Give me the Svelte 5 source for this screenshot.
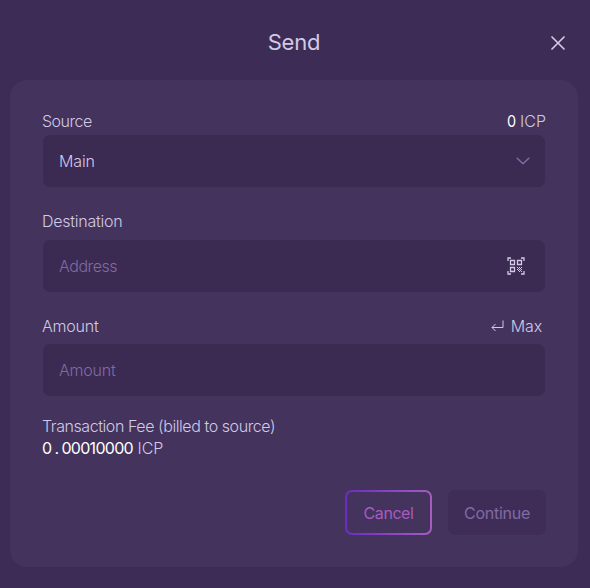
<script>
  let address = $state('');
  let amount = $state('');
</script>

<main class="dialog">
  <header>
    <h1>Send</h1>
    <button class="close" aria-label="Close">
      <svg width="14" height="14" viewBox="0 0 14 14"><path d="M1 1l12 12M13 1L1 13" /></svg>
    </button>
  </header>
  <section class="card">
    <div class="row first">
      <span class="source">Source</span>
      <span class="balance"><b>0</b> ICP</span>
    </div>
    <div class="field">
      <span class="main">Main</span>
      <svg class="chevron" width="14" height="8" viewBox="0 0 14 8"><path d="M1.2 1.2L7 6.700l5.800-5.500" /></svg>
    </div>
    <div class="row second"><span class="destination">Destination</span></div>
    <div class="field">
      <input class="address" placeholder="Address" aria-label="Address" bind:value={address} />
      <svg class="qr" width="18" height="18" viewBox="0 0 18 18">
        <path d="M1 4V1h3M14 1h3v3M17 14v3h-3M4 17H1v-3" />
        <path d="M3.500 3.500h4v4h-4zM10.500 3.500h4v4h-4zM3.500 10.500h4v4h-4z" />
        <path class="dots" d="M10 10h1v1h-1zM12 10h1v1h-1zM14 10h1v1h-1zM11 11h1v1h-1zM13 11h1v1h-1zM10 12h1v1h-1zM12 12h1v1h-1zM14 12h1v1h-1zM11 13h1v1h-1zM13 13h1v1h-1zM12 14h1v1h-1zM14 14h1v1h-1z" />
      </svg>
    </div>
    <div class="row third">
      <span class="amount-label">Amount</span>
      <button class="max">
        <svg width="13" height="12" viewBox="0 0 13 12"><path d="M12 .5v7H1M4.500 4L1 7.500 4.500 11" /></svg>
        <span>Max</span>
      </button>
    </div>
    <div class="field">
      <input class="amount" placeholder="Amount" aria-label="Amount" bind:value={amount} />
    </div>
    <div class="fee">
      <div class="fee-label">Transaction Fee (billed to source)</div>
      <div class="fee-value"><b>0<i>.</i>00010000</b> <span>ICP</span></div>
    </div>
    <footer>
      <button class="cancel">Cancel</button>
      <button class="continue" disabled>Continue</button>
    </footer>
  </section>
</main>

<style>
  :global(body) { margin: 0; background: #3d2c56; }
  * { box-sizing: border-box; }
  .dialog {
    height: 588px;
    padding: 0 12px 0 10px;
    background: #3d2c56;
    color: #d1c9e5;
    font: 350 16px/22px Inter, "Liberation Sans", sans-serif;
  }
  header { height: 80px; display: grid; grid-template-columns: 28px 1fr 28px; align-items: center; padding: 5px 6px 0 6px; }
  h1 { grid-column: 2; margin: 0 0 2px; text-align: center; font-size: 22px; line-height: 30px; font-weight: 400; letter-spacing: -.2px; }
  button { font: inherit; color: inherit; background: none; border: 0; padding: 0; }
  .close { display: flex; justify-content: center; }
  svg { display: block; flex: none; fill: none; stroke: #d1c9e5; }
  .close svg { stroke-width: 1.700; stroke-linecap: round; }
  .card { height: 487px; padding: 30px 32px 32px; border-radius: 17px; background: #44335d; }
  .row { display: flex; justify-content: space-between; height: 22px; }
  .row span { white-space: nowrap; }
  .source { letter-spacing: -.5px; }
  .destination { letter-spacing: -.26px; }
  .amount-label, .amount { letter-spacing: -.2px; }
  .address { letter-spacing: -.45px; }
  .main, .max { letter-spacing: -.15px; }
  .fee-label { letter-spacing: -.43px; }
  .second { margin-top: 23px; }
  .third { margin-top: 23px; }
  b { font-weight: 400; color: #fff; }
  .balance b { display: inline-block; transform: scaleX(.9); transform-origin: right; }
  .field { height: 52px; margin: 3px 1px 0; padding: 0 15px 0 16px; border-radius: 7px; background: #3b2a52; display: flex; align-items: center; justify-content: space-between; }
  .second + .field { margin-top: 8px; }
  .third + .field { margin-top: 7px; }
  .chevron { stroke: #806ba3; stroke-width: 1.5; stroke-linecap: round; stroke-linejoin: round; }
  .qr { margin-right: 5px; stroke-width: 1.300; }
  .dots { fill: #d1c9e5; stroke: none; }
  input { width: 300px; padding: 0; border: 0; outline: 0; background: none; font: inherit; color: inherit; }
  input::placeholder { color: #806ba3; opacity: 1; }
  .max { display: flex; align-items: center; gap: 7px; margin-right: 4px; }
  .fee { margin-top: 19px; white-space: nowrap; }
  .fee-value b { letter-spacing: -.7px; }
  i { font-style: normal; display: inline-block; width: 10px; text-align: center; }
  footer { display: flex; justify-content: flex-end; gap: 16px; margin-top: 31px; }
  footer button { height: 45px; border-radius: 7px; font-weight: 400; }
  .cancel { width: 87px; color: #a65cc1; letter-spacing: -.45px; border: 2px solid transparent; background: linear-gradient(#44335d, #44335d) padding-box, linear-gradient(90deg, #6b2cc4, #a65cc1) border-box; }
  .continue { width: 98px; background: #3f2d58; color: #806ba3; letter-spacing: -.25px; }
</style>
